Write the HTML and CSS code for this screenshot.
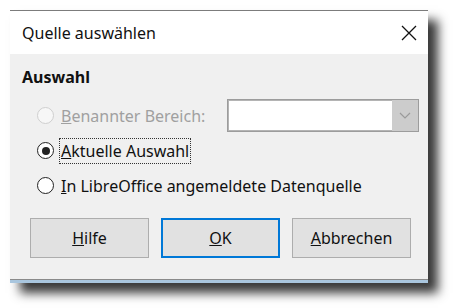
FILE: index.html
```html
<!DOCTYPE html>
<html lang="de">
<head>
  <meta charset="UTF-8" />
  <title>Quelle auswählen</title>
  <link rel="stylesheet" href="styles.css">
</head>
<body>

  <div class="ventana">
    <!-- Barra de título -->
    <div class="titulo">
      <span>Quelle auswählen</span>
      <svg class="cerrar" width="16" height="16" viewBox="0 0 16 16">
        <path d="M1 1 L15 15 M15 1 L1 15" stroke="#111" stroke-width="1.3" fill="none"/>
      </svg>
    </div>

    <!-- Contenido -->
    <div class="contenido">
      <h2>Auswahl</h2>

      <div class="opcion fila-combo">
        <label class="radio deshabilitado">
          <span class="circulo"></span>
          <span><u>B</u>enannter Bereich:</span>
        </label>
        <div class="combo">
          <span class="flecha">
            <svg width="12" height="8" viewBox="0 0 12 8">
              <path d="M1 1 L6 6 L11 1" stroke="#9a9a9a" stroke-width="1.2" fill="none"/>
            </svg>
          </span>
        </div>
      </div>

      <div class="opcion">
        <label class="radio">
          <span class="circulo marcado"></span>
          <span class="foco"><u>A</u>ktuelle Auswahl</span>
        </label>
      </div>

      <div class="opcion">
        <label class="radio">
          <span class="circulo"></span>
          <span><u>I</u>n LibreOffice angemeldete Datenquelle</span>
        </label>
      </div>

      <div class="botones">
        <button type="button"><u>H</u>ilfe</button>
        <button type="button" class="activo"><u>O</u>K</button>
        <button type="button"><u>A</u>bbrechen</button>
      </div>
    </div>

    <!-- Restos de la ventana de abajo -->
    <div class="borde-inferior"></div>
  </div>

</body>
</html>
```

FILE: styles.css
```css
/* Base */
* { box-sizing: border-box; margin: 0; padding: 0; }
html, body { height: 100%; }
body {
  font-family: "Noto Sans", "Open Sans", sans-serif;
  background: #fff;
  color: #111;
  min-height: 308px;
  padding-top: 10px;
}

/* Ventana del diálogo */
.ventana {
  width: 418px;
  margin-left: 10px;
  border-top: 1px solid #7c7c7c;
  box-shadow: 10px 10px 10px rgba(0,0,0,0.78);
}

.titulo {
  height: 43px;
  background: #fff;
  display: flex;
  align-items: center;
  justify-content: space-between;
  padding: 0 11px 0 12px;
  font-size: 16px;
}

.contenido {
  background: #f0f0f0;
  height: 225px;
  padding: 12px 9px 0 12px;
  font-size: 16px;
}
.contenido h2 {
  font-size: 16px;
  font-weight: 700;
  margin-bottom: 10px;
}

/* Opciones */
.opcion {
  display: flex;
  align-items: center;
  height: 35px;
  padding-left: 15px;
}
.fila-combo {
  justify-content: space-between;
}
.radio {
  display: flex;
  align-items: center;
  gap: 7px;
}
.circulo {
  flex: none;
  width: 17px;
  height: 17px;
  border: 1.5px solid #222;
  border-radius: 50%;
  background: #fff;
  display: flex;
  align-items: center;
  justify-content: center;
}
.circulo.marcado::after {
  content: "";
  width: 8px;
  height: 8px;
  border-radius: 50%;
  background: #222;
}
.deshabilitado { color: #a0a0a0; }
.deshabilitado .circulo {
  border-color: #cfcfcf;
  background: #f7f7f7;
}
.foco {
  outline: 1px dotted #333;
  outline-offset: 1px;
}

/* Combo */
.combo {
  width: 192px;
  height: 33px;
  background: #fff;
  border: 1px solid #9c9c9c;
  box-shadow: inset 0 0 0 1px #b4b4b4;
  display: flex;
  justify-content: flex-end;
}
.flecha {
  width: 26px;
  background: #cccccc;
  display: flex;
  align-items: center;
  justify-content: center;
}

/* Botones */
.botones {
  display: flex;
  gap: 12px;
  margin-top: 15px;
  padding-left: 8px;
}
.botones button {
  width: 119px;
  height: 40px;
  font-family: inherit;
  font-size: 16px;
  color: #111;
  background: #e1e1e1;
  border: 1px solid #adadad;
}
.botones button.activo {
  border: 2px solid #0078d7;
}

.borde-inferior {
  height: 4px;
  background: #a9c6de;
  border-top: 1px solid #8a8a8a;
}
```
